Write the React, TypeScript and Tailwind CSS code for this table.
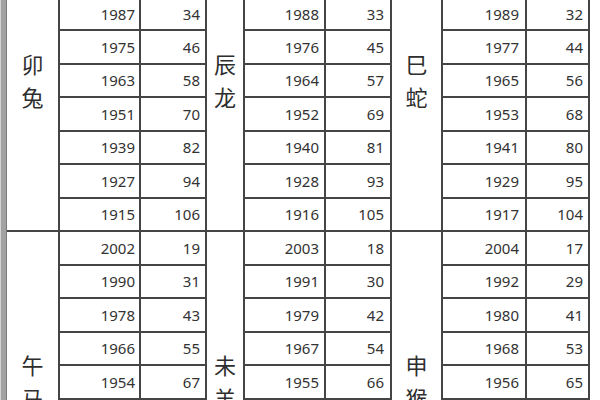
import React from "react";

type Block = { z: [string, string]; zw: string; yw: string; aw: string; ypr: string; apr: string; rows: [number, number][] };

const mk = (start: number, base: number, n: number): [number, number][] =>
  Array.from({ length: n }, (_, i) => {
    const y = start - 12 * i;
    return [y, base - y + 1] as [number, number];
  });

const snake = mk(1989, 2020, 7).map(([y, a]) => [y, y === 1929 ? 95 : a] as [number, number]);

const groups: { pt: string; first: string; blocks: Block[] }[] = [
  {
    pt: "pt-[47px]",
    first: "h-[31px]",
    blocks: [
      { z: ["卯", "兔"], zw: "w-[53px]", yw: "w-[81px]", aw: "w-[66px]", ypr: "pr-[4px]", apr: "pr-[5px]", rows: mk(1987, 2020, 7) },
      { z: ["辰", "龙"], zw: "w-[38px]", yw: "w-[81px]", aw: "w-[66px]", ypr: "pr-[5px]", apr: "pr-[6px]", rows: mk(1988, 2020, 7) },
      { z: ["巳", "蛇"], zw: "w-[51px]", yw: "w-[84px]", aw: "w-[63px]", ypr: "pr-[6px]", apr: "pr-[5px]", rows: snake },
    ],
  },
  {
    pt: "pt-[116px]",
    first: "h-[33.5px]",
    blocks: [
      { z: ["午", "马"], zw: "w-[53px]", yw: "w-[81px]", aw: "w-[66px]", ypr: "pr-[4px]", apr: "pr-[5px]", rows: mk(2002, 2020, 5) },
      { z: ["未", "羊"], zw: "w-[38px]", yw: "w-[81px]", aw: "w-[66px]", ypr: "pr-[5px]", apr: "pr-[6px]", rows: mk(2003, 2020, 5) },
      { z: ["申", "猴"], zw: "w-[51px]", yw: "w-[84px]", aw: "w-[63px]", ypr: "pr-[6px]", apr: "pr-[5px]", rows: mk(2004, 2020, 5) },
    ],
  },
];

function BlockView({ b, pt, first }: { b: Block; pt: string; first: string }) {
  return (
    <div className="flex">
      <div
        className={`${b.zw} ${pt} border-r-2 border-b-2 border-[#454545] flex flex-col items-center justify-start text-[22px] leading-[33px] text-[#2e2e2e]`}
        style={{ fontFamily: '"Noto Sans CJK SC", "Noto Sans", sans-serif' }}
      >
        <span>{b.z[0]}</span>
        <span>{b.z[1]}</span>
      </div>
      <div className="flex flex-col">
        {b.rows.map(([y, a], i) => (
          <div key={y} className={`flex ${i === 0 ? first : "h-[33.5px]"}`}>
            <div className={`${b.yw} ${b.ypr} border-r-2 border-b-2 border-[#454545] flex items-center justify-end`}>{y}</div>
            <div className={`${b.aw} ${b.apr} border-r-2 border-b-2 border-[#454545] flex items-center justify-end whitespace-nowrap`}>{a}</div>
          </div>
        ))}
      </div>
    </div>
  );
}

export default function App() {
  return (
    <div className="w-[600px] h-[400px] overflow-hidden bg-white flex" style={{ fontFamily: '"Noto Sans", "Open Sans", sans-serif' }}>
      <div className="w-[7px] h-full shrink-0 bg-[#a2a2a2] border-l border-[#d4d4d4] border-r border-r-[#7a7a7a]" />
      <div className="flex flex-col text-[15px] text-[#333]">
        {groups.map((g, gi) => (
          <div key={gi} className="flex">
            {g.blocks.map((b, bi) => (
              <BlockView key={bi} b={b} pt={g.pt} first={g.first} />
            ))}
          </div>
        ))}
      </div>
    </div>
  );
}
